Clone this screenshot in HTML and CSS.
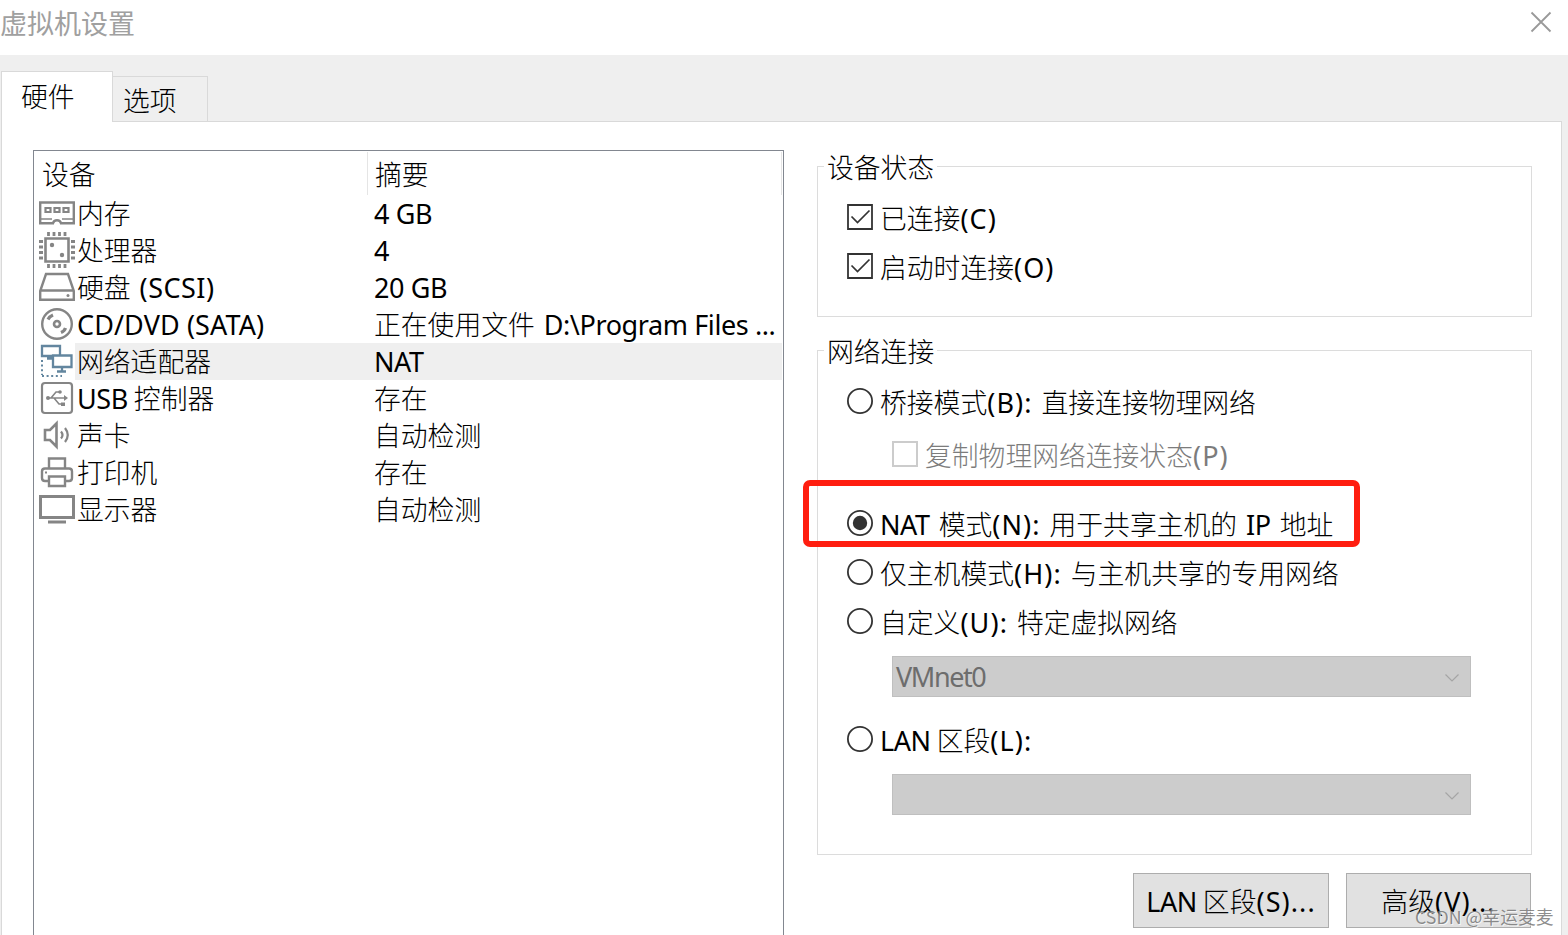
FILE: index.html
```html
<!DOCTYPE html>
<html lang="zh-CN">
	<head>
		<meta charset="UTF-8">
		<title>虚拟机设置</title>
		<link rel="stylesheet" href="styles.css">
	</head>
	<body>
		<div class="titlebar">
			<h1>虚拟机设置</h1>
			<svg class="close" width="22" height="22" viewBox="0 0 22 22"><path d="M1.5 1.5l19 19M20.5 1.5l-19 19"/></svg>
		</div>
		<div class="tabs">
			<div class="tab active">硬件</div>
			<div class="tab">选项</div>
		</div>
		<div class="panel">
			<div class="device-list">
				<div class="list-head">
					<span class="col-name">设备</span>
					<span class="col-info">摘要</span>
				</div>
				<div class="device">
					<svg class="icon" viewBox="0 0 36 36"><path stroke-width="2.400" d="M1.200 7.500h33.600v20.700H22c-1-4-7-4-8 0H1.200z"/><path stroke-width="1.600" d="M2 24h11M23 24h11"/><path stroke-width="2.200" d="M6.500 13h5v4h-5zM15.500 13h5v4h-5zM24.500 13h5v4h-5z"/></svg>
					<span class="name">内存</span><span class="info"><b>4 GB</b></span>
				</div>
				<div class="device">
					<svg class="icon" viewBox="0 0 36 36"><path stroke-width="2.600" d="M6.500 6.500h23v23h-23z"/><path stroke-width="2.800" d="M9.500 0v4M15 0v4M20.500 0v4M26 0v4M9.500 32v4M15 32v4M20.500 32v4M26 32v4M0 9.500h4M0 15h4M0 20.500h4M0 26h4M32 9.500h4M32 15h4M32 20.500h4M32 26h4"/><circle class="fill" cx="13" cy="13" r="2.200"/><circle class="fill" cx="23" cy="23" r="2.200"/></svg>
					<span class="name">处理器</span><span class="info"><b>4</b></span>
				</div>
				<div class="device">
					<svg class="icon" viewBox="0 0 36 36"><path stroke-width="2.400" d="M7 5h22l5.800 17v8.800H1.200V22zM1.200 21.500h33.600"/><circle class="fill" cx="29" cy="26.500" r="1.500"/></svg>
					<span class="name">硬盘 <b class="tag">(SCSI)</b></span><span class="info"><b>20 GB</b></span>
				</div>
				<div class="device">
					<svg class="icon" viewBox="0 0 36 36"><circle cx="18" cy="18" r="14.800" stroke-width="2.400"/><circle cx="18" cy="18" r="3" stroke-width="2.600"/><path stroke-width="3.200" d="M9 13.500q1.500-3 5-4.500M22 26.500q3.500-1.500 4.500-4.500"/></svg>
					<span class="name"><b class="tag sata">CD/DVD (SATA)</b></span><span class="info">正在使用文件 <b>D:\Program Files ...</b></span>
				</div>
				<div class="device selected">
					<svg class="icon blue" viewBox="0 0 36 36"><path stroke-width="2.300" d="M13 13H3V3h18v8.500M13 15.500H8M14 12.500h18.500V24H14zM23 24v4M18 28.500h9"/><path stroke-width="2" stroke-dasharray="2 2.600" d="M3 17v15M3 33h20"/></svg>
					<span class="name">网络适配器</span><span class="info"><b>NAT</b></span>
				</div>
				<div class="device">
					<svg class="icon" viewBox="0 0 36 36"><rect x="3" y="3" width="30" height="30" rx="3" stroke-width="2.200"/><path stroke-width="1.600" d="M8 18h18M12 18l5-6h4M15 18l5 6h3"/><path class="fill" d="M25 15l4 3-4 3z"/><circle class="fill" cx="9" cy="18" r="2"/><circle class="fill" cx="21" cy="12" r="1.800"/><path class="fill" d="M22 22.500h4v3.500h-4z"/></svg>
					<span class="name"><b class="lead">USB</b> 控制器</span><span class="info">存在</span>
				</div>
				<div class="device">
					<svg class="icon" viewBox="0 0 36 36"><path stroke-width="2.600" d="M6 13h5l6.500-6.500v23L11 23H6z"/><path stroke-width="2.200" d="M22 14.500q3 3.500 0 7M26 11q5.500 7 0 14"/></svg>
					<span class="name">声卡</span><span class="info">自动检测</span>
				</div>
				<div class="device">
					<svg class="icon" viewBox="0 0 36 36"><path stroke-width="2.400" d="M10 14.500V4.500h16v10M10 27H6q-3 0-3-3v-6.500q0-3 3-3h24q3 0 3 3V24q0 3-3 3h-4M10 22.500h16V32H10z"/><path stroke-width="2" d="M6 18.500h2"/></svg>
					<span class="name">打印机</span><span class="info">存在</span>
				</div>
				<div class="device">
					<svg class="icon" viewBox="0 0 36 36"><path stroke-width="3" d="M1.500 5.500h33v21h-33zM9 31h18"/></svg>
					<span class="name">显示器</span><span class="info">自动检测</span>
				</div>
			</div>

			<div class="settings">
				<div class="group state">
					<div class="legend">设备状态</div>
					<div class="option">
						<svg class="box" viewBox="0 0 26 26"><path d="M1 1h24v24H1z"/><path class="tick" d="M4.500 12.500l6 6 12-12"/></svg>
						<span>已连接<b class="key">(C)</b></span>
					</div>
					<div class="option">
						<svg class="box" viewBox="0 0 26 26"><path d="M1 1h24v24H1z"/><path class="tick" d="M4.500 12.500l6 6 12-12"/></svg>
						<span>启动时连接<b class="key">(O)</b></span>
					</div>
				</div>

				<div class="group network">
					<div class="legend">网络连接</div>
					<div class="option">
						<svg class="box" viewBox="0 0 26 26"><circle cx="13" cy="13" r="12.100"/></svg>
						<span>桥接模式<b class="key">(B):</b> 直接连接物理网络</span>
					</div>
					<div class="option sub disabled">
						<svg class="box" viewBox="0 0 26 26"><path d="M1 1h24v24H1z"/></svg>
						<span>复制物理网络连接状态<b class="key">(P)</b></span>
					</div>
					<div class="option nat">
						<svg class="box" viewBox="0 0 26 26"><circle cx="13" cy="13" r="12.100"/><circle class="dot" cx="13" cy="13" r="7.200"/></svg>
						<span><b>NAT</b> 模式<b class="key">(N):</b> 用于共享主机的 <b>IP</b> 地址</span>
						<div class="highlight"></div>
					</div>
					<div class="option">
						<svg class="box" viewBox="0 0 26 26"><circle cx="13" cy="13" r="12.100"/></svg>
						<span>仅主机模式<b class="key">(H):</b> 与主机共享的专用网络</span>
					</div>
					<div class="option">
						<svg class="box" viewBox="0 0 26 26"><circle cx="13" cy="13" r="12.100"/></svg>
						<span>自定义<b class="key">(U):</b> 特定虚拟网络</span>
					</div>
					<div class="combo">
						<b>VMnet0</b>
						<svg width="14" height="8" viewBox="0 0 14 8"><path d="M.5.5L7 7 13.500.5"/></svg>
					</div>
					<div class="option lan">
						<svg class="box" viewBox="0 0 26 26"><circle cx="13" cy="13" r="12.100"/></svg>
						<span><b class="lead">LAN</b> 区段<b class="key">(L):</b></span>
					</div>
					<div class="combo">
						<b></b>
						<svg width="14" height="8" viewBox="0 0 14 8"><path d="M.5.5L7 7 13.500.5"/></svg>
					</div>
				</div>

				<div class="buttons">
					<div class="btn btn-lan"><b class="lead">LAN</b> 区段<b class="key">(S)...</b></div>
					<div class="btn btn-adv">高级<b class="key">(V)...</b></div>
				</div>
			</div>
		</div>
		<div class="watermark">CSDN @幸运麦麦</div>
	</body>
</html>
```
FILE: styles.css
```css
* {
	box-sizing: border-box;
}
body {
	margin: 0;
	height: 935px;
	overflow: hidden;
	position: relative;
	display: flex;
	flex-direction: column;
	background: #efefef;
	color: #000;
	font-family: "Noto Sans CJK SC", sans-serif;
	font-weight: 300;
	font-size: 26.8px;
	line-height: 36px;
	word-spacing: 3px;
	white-space: nowrap;
}
/* latin parts of a label */
b {
	font-family: "Noto Sans", sans-serif;
	font-weight: 400;
	font-size: 27px;
	line-height: 1;
	letter-spacing: -0.4px;
	word-spacing: 0;
}
b.key {
	letter-spacing: 1.1px;
}
b.tag {
	letter-spacing: 0.5px;
}
b.sata {
	letter-spacing: 0.1px;
}
b.lead {
	margin-right: -3px;
}
svg {
	display: block;
	flex: none;
	fill: none;
}

.titlebar {
	flex: none;
	height: 55px;
	padding: 0 16px 8px 0;
	display: flex;
	align-items: center;
	justify-content: space-between;
	background: #fff;
}
.titlebar h1 {
	margin: -2px 0 0;
	font-size: 27px;
	font-weight: 400;
	color: #a0a0a0;
}
.close {
	margin-top: -3px;
	stroke: #999;
	stroke-width: 1.8;
}

.tabs {
	flex: none;
	height: 66px;
	padding-left: 1px;
	display: flex;
	align-items: flex-end;
}
.tab {
	width: 95px;
	height: 45px;
	padding: 5px 0 0 10px;
	border: 1px solid #d9d9d9;
	border-left: 0;
	border-bottom: 0;
}
.tab.active {
	width: 112px;
	height: 51px;
	margin-bottom: -1px;
	padding: 6px 0 0 19px;
	border-left: 1px solid #d9d9d9;
	background: #fff;
	z-index: 1;
}

.panel {
	flex: 1;
	min-height: 0;
	margin: 0 6px 0 1px;
	padding: 28px 29px 0 31px;
	display: flex;
	gap: 33px;
	border: 1px solid #d9d9d9;
	border-bottom: 0;
	background: #fff;
}

.device-list {
	width: 751px;
	border: 1px solid #828790;
	border-bottom: 0;
}
.list-head {
	display: flex;
	height: 44px;
	padding: 1px 1px 0 0;
	line-height: 44px;
}
.col-name {
	width: 334px;
	padding-left: 8px;
	border-right: 1px solid #e5e5e5;
}
.col-info {
	flex: 1;
	padding-left: 7px;
	border-right: 1px solid #e5e5e5;
}
.device {
	display: flex;
	height: 37px;
	padding-left: 5px;
	line-height: 35px;
}
.icon {
	width: 36px;
	height: 36px;
	stroke: #858585;
}
.icon.blue {
	stroke: #63869f;
}
.icon .fill {
	fill: #858585;
	stroke: none;
}
.name {
	width: 299px;
	padding-left: 2px;
}
.info {
	flex: 1;
	margin-right: 1px;
}
.selected .name,
.selected .info {
	background: #efefef;
}

.settings {
	flex: 1;
	padding-top: 16px;
}
.group {
	position: relative;
	border: 1px solid #dcdcdc;
	padding-left: 29px;
}
.legend {
	position: absolute;
	top: -18px;
	left: 6px;
	padding: 0 3px;
	background: #fff;
}
.state {
	height: 151px;
	padding-top: 37px;
}
.network {
	height: 505px;
	margin-top: 33px;
	padding-top: 37px;
}
.option {
	display: flex;
	gap: 7px;
	height: 26px;
	margin-bottom: 23px;
	line-height: 27px;
}
.network .option {
	position: relative;
}
.option.sub {
	margin: 27px 0 0 45px;
	color: #7c7c7c;
}
.option.nat {
	margin-top: 43px;
}
.box {
	width: 26px;
	height: 26px;
	stroke: #333;
	stroke-width: 1.8;
}
.disabled .box {
	stroke: #ccc;
	stroke-width: 2;
}
.box .dot {
	fill: #333;
	stroke: none;
}
.box .tick {
	stroke-width: 1.7;
}
.highlight {
	position: absolute;
	left: -44.5px;
	top: -30.5px;
	width: 557px;
	height: 67px;
	border: 6px solid #ff1e10;
	border-radius: 7px;
}
.combo {
	display: flex;
	align-items: center;
	justify-content: space-between;
	width: 579px;
	height: 41px;
	margin: -1px 0 0 45px;
	padding: 0 11px 0 3px;
	border: 1px solid #bfbfbf;
	background: #ccc;
	color: #6d6d6d;
}
.combo b {
	letter-spacing: -1.4px;
}
.combo svg {
	margin-top: 2px;
	stroke: #a5a5a5;
	stroke-width: 1.2;
}
.option.lan {
	margin-top: 29px;
}
.option.lan + .combo {
	margin-top: -1px;
}

.buttons {
	display: flex;
	justify-content: flex-end;
	gap: 17px;
	margin-top: 18px;
}
.btn {
	height: 55px;
	border: 1px solid #adadad;
	background: #e1e1e1;
	line-height: 53px;
	text-align: center;
}
.btn-lan {
	width: 196px;
}
.btn-adv {
	width: 185px;
	margin-right: 1px;
}

.watermark {
	position: absolute;
	left: 1415px;
	top: 898px;
	color: rgba(120, 120, 120, 0.85);
	font-size: 17.8px;
	font-weight: 400;
	word-spacing: 0;
	text-shadow: 1px 1px 0 rgba(255, 255, 255, 0.7);
}
```
